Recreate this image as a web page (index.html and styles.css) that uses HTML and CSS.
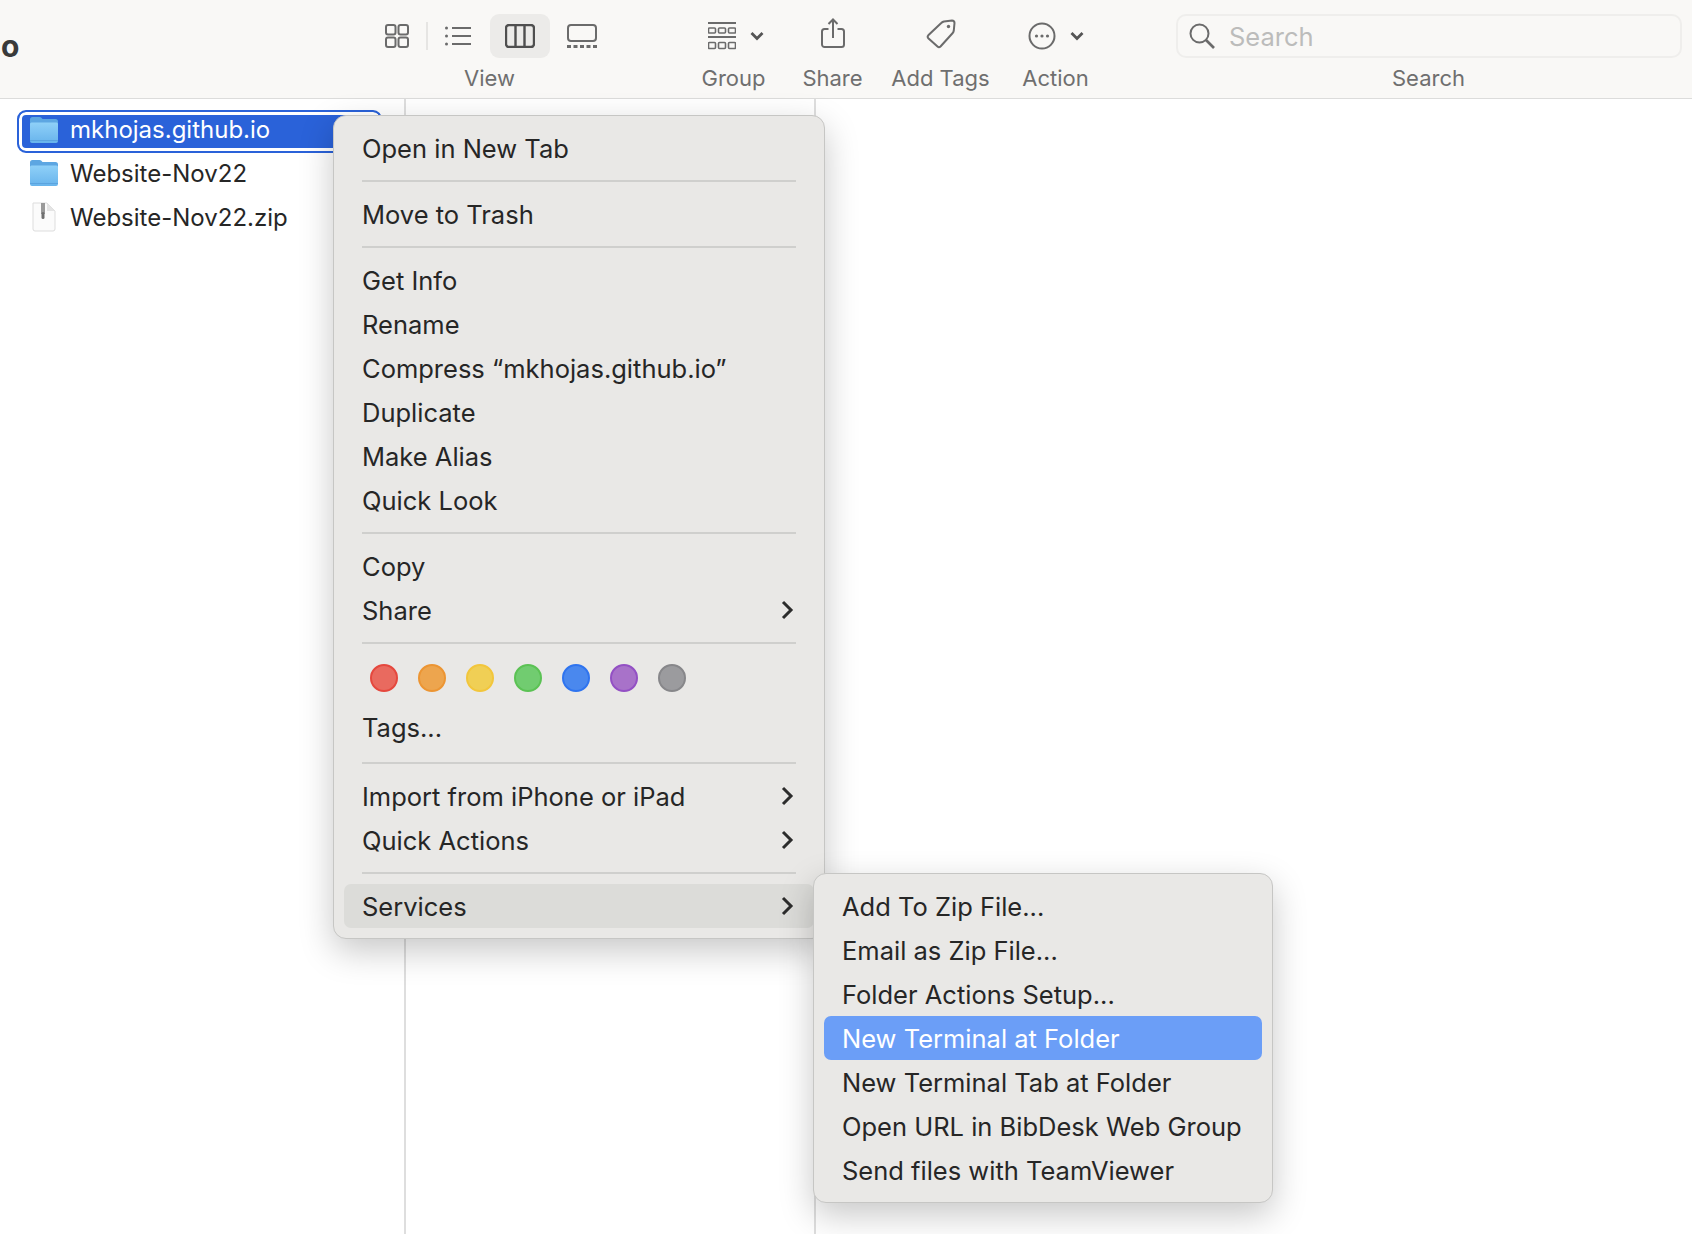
FILE: index.html
```html
<!DOCTYPE html>
<html lang="en">
<head>
  <meta charset="UTF-8">
  <title>Finder</title>
  <link rel="stylesheet" href="styles.css">
</head>
<body>
  <header class="toolbar">
    <div class="title">o</div>

    <div class="tool tool-view">
      <div class="tool-icons">
        <span class="icon-btn btn-grid">
          <svg width="24" height="24" viewBox="0 0 24 24"><rect x="1" y="1" width="9.5" height="9.5" rx="2"/><rect x="13.5" y="1" width="9.5" height="9.5" rx="2"/><rect x="1" y="13.5" width="9.5" height="9.5" rx="2"/><rect x="13.5" y="13.5" width="9.5" height="9.5" rx="2"/></svg>
        </span>
        <span class="tool-sep"></span>
        <span class="icon-btn btn-list">
          <svg width="26" height="20" viewBox="0 0 26 20"><circle class="solid" cx="1.5" cy="2" r="1.5"/><circle class="solid" cx="1.5" cy="10" r="1.5"/><circle class="solid" cx="1.5" cy="18" r="1.5"/><path d="M7 2h19M7 10h19M7 18h19"/></svg>
        </span>
        <span class="icon-btn btn-col is-active">
          <svg width="30" height="24" viewBox="0 0 30 24"><rect class="dark" x="1" y="1" width="28" height="22" rx="3"/><path class="dark" d="M10.5 1v22M19.5 1v22"/></svg>
        </span>
        <span class="icon-btn btn-gallery">
          <svg width="30" height="24" viewBox="0 0 30 24"><rect x="1" y="1" width="28" height="16" rx="3"/><path class="dots" d="M0 22.5h30"/></svg>
        </span>
      </div>
      <div class="tool-label label-view">View</div>
    </div>

    <div class="tool tool-group">
      <div class="tool-icons">
        <svg width="28" height="28" viewBox="0 0 28 28"><path d="M0 1h28M0 15h28"/><rect class="thin" x="0.5" y="6" width="7" height="5" rx="1"/><rect class="thin" x="10.5" y="6" width="7" height="5" rx="1"/><rect class="thin" x="20.5" y="6" width="7" height="5" rx="1"/><rect class="thin" x="0.5" y="20.5" width="7" height="6" rx="1"/><rect class="thin" x="10.5" y="20.5" width="7" height="6" rx="1"/><rect class="thin" x="20.5" y="20.5" width="7" height="6" rx="1"/></svg>
        <svg class="caret" width="14" height="10" viewBox="0 0 14 10"><path d="M1.5 2L7 7.5L12.5 2"/></svg>
      </div>
      <div class="tool-label">Group</div>
    </div>

    <div class="tool tool-share">
      <div class="tool-icons icons-share">
        <svg width="24" height="30" viewBox="0 0 24 30"><path d="M7.5 11H3.5a2.5 2.5 0 0 0-2.5 2.5V26.5a2.5 2.5 0 0 0 2.5 2.5h17a2.5 2.5 0 0 0 2.5-2.5V13.5a2.5 2.5 0 0 0-2.5-2.5H16.5"/><path d="M12 20V1.5M7.5 6L12 1.5L16.5 6"/></svg>
      </div>
      <div class="tool-label">Share</div>
    </div>

    <div class="tool tool-tags">
      <div class="tool-icons icons-tags">
        <svg width="30" height="30" viewBox="0 0 30 30"><path d="M18 2.5L26 1.5Q28.5 1.5 28.5 4L27.8 11.5Q27.6 13 26.5 14.2L14.5 27.5Q13 29 11.5 27.6L2.3 19.2Q1 17.8 2.3 16.3L15.5 3.8Q16.5 2.8 18 2.5Z"/><circle class="solid" cx="22.5" cy="7.5" r="1.7"/></svg>
      </div>
      <div class="tool-label">Add Tags</div>
    </div>

    <div class="tool tool-action">
      <div class="tool-icons icons-action">
        <svg width="28" height="28" viewBox="0 0 28 28"><circle cx="14" cy="14" r="12.5"/><circle class="solid" cx="8.5" cy="14" r="1.6"/><circle class="solid" cx="14" cy="14" r="1.6"/><circle class="solid" cx="19.5" cy="14" r="1.6"/></svg>
        <svg class="caret" width="14" height="10" viewBox="0 0 14 10"><path d="M1.5 2L7 7.5L12.5 2"/></svg>
      </div>
      <div class="tool-label">Action</div>
    </div>

    <div class="tool tool-search">
      <div class="search-box">
        <svg width="26" height="26" viewBox="0 0 26 26"><circle cx="10.5" cy="10.5" r="9"/><path class="thick" d="M17 17L25 25"/></svg>
        <span class="search-text">Search</span>
      </div>
      <div class="tool-label label-search">Search</div>
    </div>
  </header>

  <main class="columns">
    <section class="column column-first">
      <div class="file is-selected">
        <svg class="file-icon" width="30" height="28" viewBox="0 0 30 28"><use href="#folder"/></svg>
        <span>mkhojas.github.io</span>
      </div>
      <div class="file">
        <svg class="file-icon" width="30" height="28" viewBox="0 0 30 28"><use href="#folder"/></svg>
        <span>Website-Nov22</span>
      </div>
      <div class="file">
        <svg class="file-icon" width="30" height="30" viewBox="0 0 30 30">
          <path d="M4 1h14l8 8v18a2 2 0 0 1-2 2H6a2 2 0 0 1-2-2z" fill="#fbfbfb" stroke="#dddddd"/>
          <path d="M18 1l8 8h-8z" fill="#e4e4e4"/>
          <rect x="12" y="1" width="4" height="11" fill="#9a9a9a"/>
          <rect x="12.5" y="10" width="3" height="7" rx="1.5" fill="#6f6f6f"/>
        </svg>
        <span>Website-Nov22.zip</span>
      </div>
    </section>
    <section class="column column-second"></section>
  </main>

  <!-- context menu -->
  <nav class="menu menu-main">
    <div class="menu-item">Open in New Tab</div>
    <div class="menu-sep"></div>
    <div class="menu-item">Move to Trash</div>
    <div class="menu-sep"></div>
    <div class="menu-item">Get Info</div>
    <div class="menu-item">Rename</div>
    <div class="menu-item">Compress “mkhojas.github.io”</div>
    <div class="menu-item">Duplicate</div>
    <div class="menu-item">Make Alias</div>
    <div class="menu-item">Quick Look</div>
    <div class="menu-sep"></div>
    <div class="menu-item">Copy</div>
    <div class="menu-item has-sub">Share<svg class="arrow" width="14" height="20" viewBox="0 0 14 20"><path d="M3 2l8 8l-8 8"/></svg></div>
    <div class="menu-sep"></div>
    <div class="tag-row">
      <span class="tag tag-red"></span>
      <span class="tag tag-orange"></span>
      <span class="tag tag-yellow"></span>
      <span class="tag tag-green"></span>
      <span class="tag tag-blue"></span>
      <span class="tag tag-purple"></span>
      <span class="tag tag-grey"></span>
    </div>
    <div class="menu-item">Tags...</div>
    <div class="menu-sep menu-sep-tall"></div>
    <div class="menu-item has-sub">Import from iPhone or iPad<svg class="arrow" width="14" height="20" viewBox="0 0 14 20"><path d="M3 2l8 8l-8 8"/></svg></div>
    <div class="menu-item has-sub">Quick Actions<svg class="arrow" width="14" height="20" viewBox="0 0 14 20"><path d="M3 2l8 8l-8 8"/></svg></div>
    <div class="menu-sep"></div>
    <div class="menu-item has-sub is-open">Services<svg class="arrow" width="14" height="20" viewBox="0 0 14 20"><path d="M3 2l8 8l-8 8"/></svg></div>
  </nav>

  <nav class="menu menu-services">
    <div class="menu-item">Add To Zip File...</div>
    <div class="menu-item">Email as Zip File...</div>
    <div class="menu-item">Folder Actions Setup...</div>
    <div class="menu-item is-hover">New Terminal at Folder</div>
    <div class="menu-item">New Terminal Tab at Folder</div>
    <div class="menu-item">Open URL in BibDesk Web Group</div>
    <div class="menu-item">Send files with TeamViewer</div>
  </nav>

  <svg class="defs" width="0" height="0">
    <defs>
      <linearGradient id="folderFill" x1="0" y1="0" x2="0" y2="1">
        <stop offset="0" stop-color="#8fd0f8"/>
        <stop offset="1" stop-color="#68b4ec"/>
      </linearGradient>
      <symbol id="folder" viewBox="0 0 30 28">
        <path d="M1 3.5A2.5 2.5 0 0 1 3.5 1h7c1.5 0 2 .8 3 2h13a2.5 2.5 0 0 1 2.5 2.5V10H1z" fill="#5da6e2"/>
        <path d="M1 8a1.5 1.5 0 0 1 1.5-1.5h25A1.5 1.5 0 0 1 29 8v17a2 2 0 0 1-2 2H3a2 2 0 0 1-2-2z" fill="url(#folderFill)"/>
        <path d="M1 24.5h28" stroke="#5ba4df" stroke-width="1" fill="none"/>
      </symbol>
    </defs>
  </svg>
</body>
</html>
```

FILE: styles.css
```css
* {
  box-sizing: border-box;
}
html, body {
  margin: 0;
  padding: 0;
}
body {
  position: relative;
  width: 1692px;
  height: 1234px;
  overflow: hidden;
  background-color: #fff;
  font-family: Inter, "Liberation Sans", sans-serif;
  color: #262626;
}

/* toolbar */
.toolbar {
  display: flex;
  height: 99px;
  padding-top: 14px;
  background-color: #f9f8f6;
  border-bottom: 1px solid #dcdcdb;
}
.title {
  width: 378px;
  margin-top: 14px;
  padding-left: 1px;
  font-size: 30px;
  line-height: 36px;
  font-weight: 700;
  color: #3a3a3a;
}
.tool {
  display: flex;
  flex-direction: column;
  align-items: center;
  flex-shrink: 0;
}
.tool-icons {
  display: flex;
  align-items: center;
  height: 44px;
}
.tool-label {
  margin-top: 6px;
  padding-left: 1px;
  font-size: 22px;
  line-height: 28px;
  color: #6f6f6f;
  white-space: nowrap;
}
.label-search {
  padding: 0 1px 0 0;
}
.tool-view {
  width: 236px;
  align-items: flex-start;
}
.label-view {
  width: 222px;
  text-align: center;
}
.tool-group {
  width: 66px;
  margin-left: 86px;
}
.tool-share {
  width: 60px;
  margin-left: 36px;
}
.tool-tags {
  width: 100px;
  margin-left: 28px;
}
.tool-action {
  width: 70px;
  margin-left: 30px;
}
.tool-search {
  width: 506px;
  margin-left: 86px;
}

.toolbar svg {
  fill: none;
  stroke: #6b6b6b;
  stroke-width: 2;
  flex-shrink: 0;
}
.toolbar svg .solid {
  fill: #6b6b6b;
  stroke: none;
}
.toolbar svg .dark {
  stroke: #4f4f4f;
  stroke-width: 2.4;
}
.toolbar svg .thin {
  stroke-width: 1.6;
}
.toolbar svg .thick {
  stroke-width: 2.6;
}
.toolbar svg .dots {
  stroke-width: 3;
  stroke-dasharray: 4 2.5;
}
.toolbar svg.caret {
  margin-left: 15px;
  stroke: #555;
  stroke-width: 2.8;
}
.icon-btn {
  display: flex;
  align-items: center;
  justify-content: center;
  height: 44px;
  border-radius: 9px;
}
.btn-grid {
  width: 38px;
}
.tool-sep {
  width: 2px;
  height: 28px;
  margin-left: 10px;
  background-color: #e6e5e3;
}
.btn-list {
  width: 60px;
}
.btn-col {
  width: 60px;
  margin-left: 2px;
}
.btn-gallery {
  width: 64px;
}
.is-active {
  background-color: #ecebe9;
}
.tool-group .tool-icons {
  margin-left: 5px;
}
.icons-share {
  margin: -3px 0 3px 1px;
}
.icons-tags {
  margin: -2px 0 2px 1px;
}
.icons-action {
  margin-left: 2px;
}
.tool-group svg.caret {
  margin-left: 14px;
}
.icons-action svg.caret {
  margin-left: 14px;
}

.search-box {
  display: flex;
  align-items: center;
  gap: 14px;
  width: 100%;
  height: 44px;
  padding-left: 11px;
  border: 2px solid #efeeec;
  border-radius: 10px;
}
.search-text {
  font-size: 25.5px;
  color: #bcbcbb;
}

/* columns */
.columns {
  display: flex;
  height: 1135px;
}
.column {
  height: 100%;
  border-right: 2px solid #dedede;
}
.column-first {
  width: 406px;
  padding-top: 11px;
}
.column-second {
  width: 410px;
}
.file {
  display: flex;
  align-items: center;
  height: 44px;
  padding-left: 29px;
  font-size: 24px;
}
.file-icon {
  margin-right: 11px;
}
.is-selected {
  width: 365px;
  height: 43px;
  margin-left: 17px;
  padding: 0 0 4px 10px;
  border: 2px solid #2a62d9;
  border-radius: 9px;
  background-color: #2a62d9;
  box-shadow: inset 0 0 0 3px #fff;
  color: #fff;
}
.is-selected + .file {
  margin-top: -2px;
}

/* menus */
.menu {
  position: absolute;
  padding: 10px 10px 10px;
  background-color: #e9e8e6;
  border: 1px solid #c6c6c4;
  border-radius: 13px;
  box-shadow: 0 12px 34px rgba(0, 0, 0, 0.22);
  font-size: 25.5px;
  color: #262626;
}
.menu-main {
  left: 333px;
  top: 115px;
  width: 492px;
  height: 824px;
}
.menu-services {
  left: 813px;
  top: 873px;
  width: 460px;
  height: 330px;
}
.menu-item {
  display: flex;
  align-items: center;
  justify-content: space-between;
  height: 44px;
  padding: 0 18px;
  border-radius: 7px;
  white-space: nowrap;
}
.menu-sep {
  height: 22px;
  padding-top: 10px;
  margin: 0 18px;
}
.menu-sep::before {
  content: "";
  display: block;
  height: 2px;
  background-color: #cfcfcd;
}
.menu-sep-tall {
  height: 25px;
  padding-top: 13px;
}
.arrow {
  fill: none;
  stroke: #2c2c2c;
  stroke-width: 3;
  margin-right: 2px;
}
.is-open {
  background-color: #dcdcd9;
}
.is-hover {
  background-color: #6b9ef7;
  color: #fff;
}
.tag-row {
  display: flex;
  gap: 20px;
  height: 51px;
  padding: 10px 0 0 26px;
}
.tag {
  width: 28px;
  height: 28px;
  border-radius: 50%;
  border: 2px solid;
}
.tag-red { background-color: #e96a5f; border-color: #e5483e; }
.tag-orange { background-color: #eda54e; border-color: #ec9533; }
.tag-yellow { background-color: #f0cf55; border-color: #f2c63c; }
.tag-green { background-color: #71cc70; border-color: #5bc254; }
.tag-blue { background-color: #4a88ee; border-color: #2f74ef; }
.tag-purple { background-color: #a872c9; border-color: #9350c4; }
.tag-grey { background-color: #9b9b9e; border-color: #87878a; }

.defs {
  position: absolute;
}
```
